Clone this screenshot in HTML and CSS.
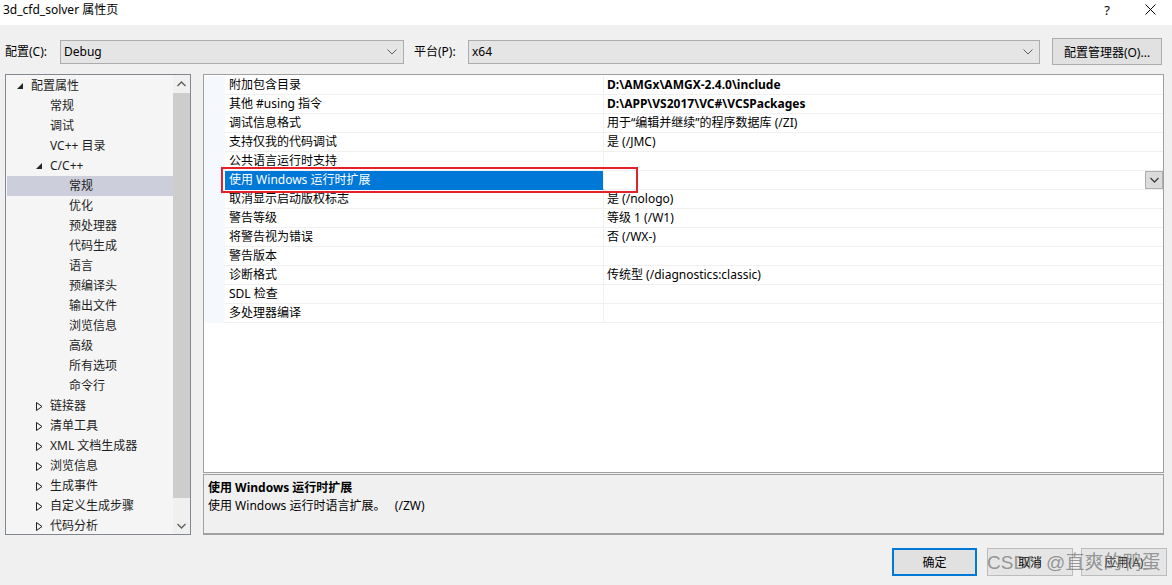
FILE: index.html
```html
<!DOCTYPE html>
<html lang="zh-CN">
<head>
<meta charset="utf-8">
<title>3d_cfd_solver 属性页</title>
<link rel="stylesheet" href="styles.css">
</head>
<body>
<div class="window">
  <div class="titlebar">
    <span class="title">3d_cfd_solver 属性页</span>
    <span class="help">?</span>
    <span class="close"><svg width="11" height="11" viewBox="0 0 11 11"><path d="M0.5 0.5 L10.5 10.5 M10.5 0.5 L0.5 10.5" stroke="#000" stroke-width="1" fill="none"/></svg></span>
  </div>

  <div class="config">
    <span class="cfg-label">配置(C):</span>
    <div class="combo combo-config"><span>Debug</span><svg class="chev" width="10" height="6" viewBox="0 0 10 6"><path d="M0.5 0.5 L5 5 L9.5 0.5" stroke="#606060" fill="none"/></svg></div>
    <span class="cfg-label plat">平台(P):</span>
    <div class="combo combo-plat"><span>x64</span><svg class="chev" width="10" height="6" viewBox="0 0 10 6"><path d="M0.5 0.5 L5 5 L9.5 0.5" stroke="#606060" fill="none"/></svg></div>
    <button class="btn cfg-mgr">配置管理器(O)...</button>
  </div>

  <div class="main">
    <div class="tree">
      <div class="tree-list">
        <div class="node l0"><span class="exp"><svg width="7" height="7" viewBox="0 0 7 7"><path d="M6 0 L6 6 L0 6 Z" fill="#262626"/></svg></span><span>配置属性</span></div>
        <div class="node l1"><span class="exp"></span><span>常规</span></div>
        <div class="node l1"><span class="exp"></span><span>调试</span></div>
        <div class="node l1"><span class="exp"></span><span>VC++ 目录</span></div>
        <div class="node l1"><span class="exp"><svg width="7" height="7" viewBox="0 0 7 7"><path d="M6 0 L6 6 L0 6 Z" fill="#262626"/></svg></span><span>C/C++</span></div>
        <div class="node l2 selected"><span class="exp"></span><span>常规</span></div>
        <div class="node l2"><span class="exp"></span><span>优化</span></div>
        <div class="node l2"><span class="exp"></span><span>预处理器</span></div>
        <div class="node l2"><span class="exp"></span><span>代码生成</span></div>
        <div class="node l2"><span class="exp"></span><span>语言</span></div>
        <div class="node l2"><span class="exp"></span><span>预编译头</span></div>
        <div class="node l2"><span class="exp"></span><span>输出文件</span></div>
        <div class="node l2"><span class="exp"></span><span>浏览信息</span></div>
        <div class="node l2"><span class="exp"></span><span>高级</span></div>
        <div class="node l2"><span class="exp"></span><span>所有选项</span></div>
        <div class="node l2"><span class="exp"></span><span>命令行</span></div>
        <div class="node l1"><span class="exp"><svg width="7" height="9" viewBox="0 0 7 9"><path d="M0.5 0.5 L6 4.5 L0.5 8.5 Z" stroke="#1e1e1e" fill="none"/></svg></span><span>链接器</span></div>
        <div class="node l1"><span class="exp"><svg width="7" height="9" viewBox="0 0 7 9"><path d="M0.5 0.5 L6 4.5 L0.5 8.5 Z" stroke="#1e1e1e" fill="none"/></svg></span><span>清单工具</span></div>
        <div class="node l1"><span class="exp"><svg width="7" height="9" viewBox="0 0 7 9"><path d="M0.5 0.5 L6 4.5 L0.5 8.5 Z" stroke="#1e1e1e" fill="none"/></svg></span><span>XML 文档生成器</span></div>
        <div class="node l1"><span class="exp"><svg width="7" height="9" viewBox="0 0 7 9"><path d="M0.5 0.5 L6 4.5 L0.5 8.5 Z" stroke="#1e1e1e" fill="none"/></svg></span><span>浏览信息</span></div>
        <div class="node l1"><span class="exp"><svg width="7" height="9" viewBox="0 0 7 9"><path d="M0.5 0.5 L6 4.5 L0.5 8.5 Z" stroke="#1e1e1e" fill="none"/></svg></span><span>生成事件</span></div>
        <div class="node l1"><span class="exp"><svg width="7" height="9" viewBox="0 0 7 9"><path d="M0.5 0.5 L6 4.5 L0.5 8.5 Z" stroke="#1e1e1e" fill="none"/></svg></span><span>自定义生成步骤</span></div>
        <div class="node l1"><span class="exp"><svg width="7" height="9" viewBox="0 0 7 9"><path d="M0.5 0.5 L6 4.5 L0.5 8.5 Z" stroke="#1e1e1e" fill="none"/></svg></span><span>代码分析</span></div>
      </div>
      <div class="vscroll">
        <div class="sb-btn"><svg width="9" height="6" viewBox="0 0 9 6"><path d="M0.5 5 L4.5 1 L8.5 5" stroke="#606060" stroke-width="1.4" fill="none"/></svg></div>
        <div class="sb-thumb"></div>
        <div class="sb-track"></div>
        <div class="sb-btn"><svg width="9" height="6" viewBox="0 0 9 6"><path d="M0.5 1 L4.5 5 L8.5 1" stroke="#606060" stroke-width="1.4" fill="none"/></svg></div>
      </div>
    </div>

    <div class="right">
      <div class="grid">
        <div class="row"><div class="gutter"></div><div class="name">附加包含目录</div><div class="value bold">D:\AMGx\AMGX-2.4.0\include</div></div>
        <div class="row"><div class="gutter"></div><div class="name">其他 #using 指令</div><div class="value bold">D:\APP\VS2017\VC#\VCSPackages</div></div>
        <div class="row"><div class="gutter"></div><div class="name">调试信息格式</div><div class="value">用于“编辑并继续”的程序数据库 (/ZI)</div></div>
        <div class="row"><div class="gutter"></div><div class="name">支持仅我的代码调试</div><div class="value">是 (/JMC)</div></div>
        <div class="row"><div class="gutter"></div><div class="name">公共语言运行时支持</div><div class="value"></div></div>
        <div class="row sel"><div class="gutter"></div><div class="name">使用 Windows 运行时扩展</div><div class="value"><span class="dd-btn"><svg width="9" height="6" viewBox="0 0 9 6"><path d="M0.5 1 L4.5 5 L8.5 1" stroke="#404040" stroke-width="1.3" fill="none"/></svg></span></div></div>
        <div class="row"><div class="gutter"></div><div class="name">取消显示启动版权标志</div><div class="value">是 (/nologo)</div></div>
        <div class="row"><div class="gutter"></div><div class="name">警告等级</div><div class="value">等级 1 (/W1)</div></div>
        <div class="row"><div class="gutter"></div><div class="name">将警告视为错误</div><div class="value">否 (/WX-)</div></div>
        <div class="row"><div class="gutter"></div><div class="name">警告版本</div><div class="value"></div></div>
        <div class="row"><div class="gutter"></div><div class="name">诊断格式</div><div class="value">传统型 (/diagnostics:classic)</div></div>
        <div class="row"><div class="gutter"></div><div class="name">SDL 检查</div><div class="value"></div></div>
        <div class="row"><div class="gutter"></div><div class="name">多处理器编译</div><div class="value"></div></div>
        <div class="highlight"></div>
      </div>
      <div class="desc">
        <div class="desc-title">使用 Windows 运行时扩展</div>
        <div class="desc-text">使用 Windows 运行时语言扩展。&nbsp;&nbsp; (/ZW)</div>
      </div>
    </div>
  </div>

  <div class="footer">
    <button class="btn dlg default">确定</button>
    <button class="btn dlg cancel">取消</button>
    <button class="btn dlg apply">应用(A)</button>
  </div>

  <div class="watermark">CSDN @直爽的鸭蛋</div>
</div>
</body>
</html>
```

FILE: styles.css
```css
* { box-sizing: border-box; }

html, body {
  margin: 0;
  padding: 0;
}

body {
  width: 1172px;
  height: 585px;
  overflow: hidden;
  background: #f0f0f0;
  font-family: "Noto Sans", "Noto Sans CJK SC", sans-serif;
  font-size: 12px;
  color: #000;
}

.window {
  position: relative;
  width: 1172px;
  height: 585px;
}

/* title bar */
.titlebar {
  height: 25px;
  background: #fff;
  display: flex;
  align-items: center;
  padding-left: 3px;
}
.title {
  line-height: 18px;
  margin-top: -6px;
}
.help {
  margin-left: auto;
  margin-right: 35px;
  font-size: 13px;
  margin-top: -6px;
}
.close {
  display: flex;
  margin-right: 16px;
  margin-top: -6px;
}

/* config row */
.config {
  display: flex;
  align-items: center;
  height: 27px;
  margin-top: 13px;
  padding-left: 5px;
}
.cfg-label {
  width: 55px;
  line-height: 18px;
}
.cfg-label.plat {
  width: 54px;
  margin-left: 10px;
}
.combo {
  height: 24px;
  background: #e5e5e5;
  border: 1px solid #acacac;
  display: flex;
  align-items: center;
  padding-left: 3px;
  padding-right: 6px;
}
.combo span { flex: 1; }
.combo-config { width: 344px; }
.combo-plat { width: 572px; }

.btn {
  font-family: inherit;
  font-size: 12px;
  color: #000;
  background: #e1e1e1;
  border: 1px solid #adadad;
  padding: 0;
}
.cfg-mgr {
  margin-left: 12px;
  width: 110px;
  height: 27px;
}

/* main area */
.main {
  display: flex;
  margin-top: 9px;
  padding-left: 5px;
  height: 461px;
}

.tree {
  width: 186px;
  height: 461px;
  border: 1px solid #828790;
  background: #f5f5f5;
  display: flex;
}
.tree-list {
  flex: 1;
  padding-left: 1px;
  padding-top: 1px;
}
.node {
  height: 20px;
  display: flex;
  align-items: center;
  color: #1e1e1e;
  line-height: 20px;
  white-space: nowrap;
}
.node.l0 { padding-left: 10px; }
.node.l1 { padding-left: 29px; }
.node.l2 { padding-left: 48px; }
.exp {
  width: 14px;
  display: flex;
  align-items: center;
}
.node.selected {
  background: #cccedb;
}

.vscroll {
  width: 17px;
  display: flex;
  flex-direction: column;
  background: #f0f0f0;
}
.sb-btn {
  height: 17px;
  display: flex;
  align-items: center;
  justify-content: center;
}
.sb-thumb {
  height: 405px;
  margin-top: 1px;
  background: #cdcdcd;
}
.sb-track { flex: 1; }

.right {
  margin-left: 12px;
  width: 961px;
  display: flex;
  flex-direction: column;
}

.grid {
  position: relative;
  height: 399px;
  border: 1px solid #a0a0a0;
  background: #fff;
  padding-top: 1px;
}
.row {
  display: flex;
  height: 19px;
}
.gutter {
  width: 21px;
  background: #f5f8fd;
}
.name {
  width: 379px;
  padding-left: 4px;
  border-right: 1px solid #f0f0f0;
  border-bottom: 1px solid #f0f0f0;
  line-height: 18px;
  white-space: nowrap;
}
.value {
  flex: 1;
  padding-left: 3px;
  border-bottom: 1px solid #f0f0f0;
  line-height: 18px;
  white-space: nowrap;
  display: flex;
}
.value.bold { font-weight: bold; }
.row.sel .name {
  background: #0078d7;
  color: #fff;
  border-bottom-color: #0078d7;
}
.dd-btn {
  margin-left: auto;
  width: 18px;
  height: 18px;
  background: #dcdcdc;
  border: 1px solid #adadad;
  display: flex;
  align-items: center;
  justify-content: center;
}
.highlight {
  position: absolute;
  left: 17px;
  top: 92px;
  width: 417px;
  height: 26px;
  border: 2px solid #e4202a;
  pointer-events: none;
}

.desc {
  margin-top: 1px;
  height: 61px;
  border: 1px solid #a0a0a0;
  border-bottom-width: 2px;
  background: #f0f0f0;
  padding: 4px 4px 0;
  line-height: 18px;
}
.desc-title { font-weight: bold; }

/* footer buttons */
.footer {
  display: flex;
  justify-content: flex-end;
  margin-top: 13px;
  padding-right: 5px;
}
.dlg {
  width: 86px;
  height: 28px;
}
.default {
  border: 2px solid #0078d7;
  width: 85px;
}
.cancel {
  margin-left: 10px;
  border-color: #bcbcbc;
  background: #e5e5e5;
}
.apply {
  margin-left: 8px;
  border-color: #bcbcbc;
  background: #e5e5e5;
  color: #333;
}

.watermark {
  position: absolute;
  left: 987px;
  top: 549px;
  font-family: "Liberation Sans", "Noto Sans CJK SC", sans-serif;
  font-size: 19px;
  line-height: 28px;
  color: rgba(95, 95, 95, 0.62);
  pointer-events: none;
  white-space: nowrap;
}
```
